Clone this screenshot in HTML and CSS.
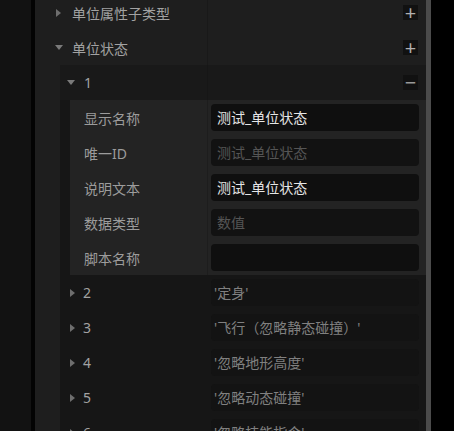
FILE: index.html
```html
<!DOCTYPE html>
<html lang="zh-CN">
<head>
    <meta charset="UTF-8">
    <title>单位状态</title>
    <link rel="stylesheet" href="styles.css">
</head>
<body>
    <div class="side"></div>
    <div class="gap"></div>
    <div class="panel">
        <div class="tree">
            <div class="row">
                <div class="name"><span class="arrow right"></span>单位属性子类型</div>
                <div class="value"><span class="btn">+</span></div>
            </div>
            <div class="row">
                <div class="name"><span class="arrow down"></span>单位状态</div>
                <div class="value"><span class="btn">+</span></div>
            </div>

            <!-- state list -->
            <div class="group">
                <div class="row item open">
                    <div class="name"><span class="arrow down"></span>1</div>
                    <div class="value"><span class="btn minus">−</span></div>
                </div>
                <div class="props">
                    <div class="prop">
                        <div class="label">显示名称</div>
                        <div class="field"><div class="input">测试_单位状态</div></div>
                    </div>
                    <div class="prop">
                        <div class="label">唯一ID</div>
                        <div class="field"><div class="input hint">测试_单位状态</div></div>
                    </div>
                    <div class="prop">
                        <div class="label">说明文本</div>
                        <div class="field"><div class="input">测试_单位状态</div></div>
                    </div>
                    <div class="prop">
                        <div class="label">数据类型</div>
                        <div class="field"><div class="input hint">数值</div></div>
                    </div>
                    <div class="prop">
                        <div class="label">脚本名称</div>
                        <div class="field"><div class="input"></div></div>
                    </div>
                </div>
                <div class="row item">
                    <div class="name"><span class="arrow right"></span>2</div>
                    <div class="field"><div class="input dim">'定身'</div></div>
                </div>
                <div class="row item">
                    <div class="name"><span class="arrow right"></span>3</div>
                    <div class="field"><div class="input dim">'飞行（忽略静态碰撞）'</div></div>
                </div>
                <div class="row item">
                    <div class="name"><span class="arrow right"></span>4</div>
                    <div class="field"><div class="input dim">'忽略地形高度'</div></div>
                </div>
                <div class="row item">
                    <div class="name"><span class="arrow right"></span>5</div>
                    <div class="field"><div class="input dim">'忽略动态碰撞'</div></div>
                </div>
                <div class="row item">
                    <div class="name"><span class="arrow right"></span>6</div>
                    <div class="field"><div class="input dim">'忽略技能指令'</div></div>
                </div>
            </div>
        </div>
    </div>
    <div class="scroll"></div>
</body>
</html>
```

FILE: styles.css
```css
body {
    margin: 0;
    height: 431px;
    overflow: hidden;
    display: flex;
    background: #000;
    font-family: "Noto Sans", "Noto Sans CJK SC", sans-serif;
    font-size: 14px;
}
.side {
    width: 31px;
    background: #121212;
}
.gap {
    width: 4px;
    background: #030303;
}
.panel {
    width: 391px;
    background: #1e1e1e;
    overflow: hidden;
}
.scroll {
    width: 5px;
    background: #4b4b4b;
}
.tree {
    margin-top: -5px;
}
.row {
    display: flex;
    height: 35px;
    align-items: center;
}
.name {
    width: 173px;
    height: 100%;
    display: flex;
    align-items: center;
    padding-left: 20px;
    color: #a2a2a2;
    border-right: 1px solid #191919;
    box-sizing: border-box;
}
.value {
    flex: 1;
    display: flex;
    justify-content: flex-end;
    padding-right: 8px;
}
.btn {
    width: 15px;
    height: 15px;
    background: #111;
    color: #b0b0b0;
    font-size: 20px;
    line-height: 15px;
    text-align: center;
}
.btn.minus {
    color: #999;
}
.arrow {
    width: 0;
    height: 0;
    margin-right: 11px;
    border-style: solid;
}
.arrow.right {
    border-width: 4px 0 4px 5px;
    border-color: transparent transparent transparent #6e6e6e;
    margin-left: 1px;
}
.arrow.down {
    border-width: 5px 4px 0 4px;
    border-color: #7a7a7a transparent transparent transparent;
    margin-right: 9px;
}
.group {
    margin-left: 25px;
    background: #161616;
}
.group .row.open {
    background: #191919;
}
.item .name {
    width: 148px;
    padding-left: 9px;
    border-right-color: #161616;
}
.item.open .name {
    padding-left: 7px;
}
.item .arrow.right {
    margin-right: 8px;
}
.props {
    margin-left: 10px;
    background: #232323;
}
.prop {
    display: flex;
    height: 35px;
    align-items: center;
}
.label {
    width: 138px;
    height: 100%;
    display: flex;
    align-items: center;
    padding-left: 14px;
    box-sizing: border-box;
    color: #9c9c9c;
    border-right: 1px solid #1d1d1d;
}
.field {
    flex: 1;
    padding: 0 7px 0 3px;
}
.input {
    height: 27px;
    line-height: 27px;
    background: #0f0f0f;
    border-radius: 4px;
    padding-left: 6px;
    color: #e6e6e6;
    white-space: nowrap;
    overflow: hidden;
}
.input.hint {
    background: #121212;
    color: #555;
}
.input.dim {
    background: #131313;
    color: #808080;
    padding-left: 3px;
}
```
